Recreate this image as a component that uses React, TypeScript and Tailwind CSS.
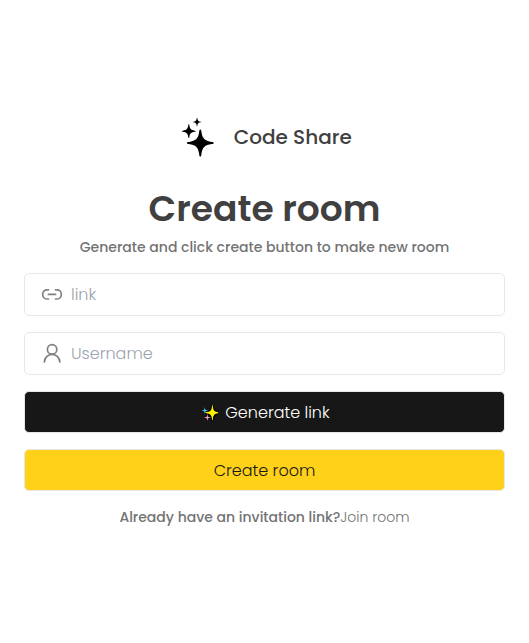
import type { ReactNode } from "react";

function Star({ x, y, r, fill }: { x: number; y: number; r: number; fill: string }) {
  return (
    <path
      transform={`translate(${x} ${y}) scale(${r / 10})`}
      d="M0-10C.6-10 .7-9.5.8-8.5 1.4-3.4 3.4-1.4 8.5-.8 9.5-.7 10-.6 10 0S9.5.7 8.5.8C3.4 1.4 1.4 3.4.8 8.5.7 9.5.6 10 0 10S-.7 9.5-.8 8.5C-1.4 3.4-3.4 1.4-8.5.8-9.5.7-10 .6-10 0S-9.5-.7-8.5-.8C-3.4-1.4-1.4-3.4-.8-8.5-.7-9.5-.6-10 0-10Z"
      fill={fill}
    />
  );
}

function Spark({ x, y, r, fill }: { x: number; y: number; r: number; fill: string }) {
  return (
    <path
      transform={`translate(${x} ${y}) scale(${r / 10})`}
      d="M0-10C.5-10 .6-9 .7-7.5 1-3 3-1 7.5-.7 9-.6 10-.5 10 0S9 .6 7.5.7C3 1 1 3 .7 7.5.6 9 .5 10 0 10S-.6 9-.7 7.5C-1 3-3 1-7.5.7-9 .6-10 .5-10 0S-9-.6-7.5-.7C-3-1-1-3-.7-7.5-.6-9-.5-10 0-10Z"
      fill={fill}
    />
  );
}

function LogoIcon() {
  return (
    <svg width="40" height="40" viewBox="0 0 40 40">
      <Star x={23.3} y={26} r={13.4} fill="#000" />
      <Star x={11.8} y={14.2} r={6.9} fill="#000" />
      <Star x={20} y={5} r={4.2} fill="#000" />
    </svg>
  );
}

function SparklesIcon() {
  return (
    <svg width="16" height="16" viewBox="0 0 16 16">
      <g stroke="#000" strokeWidth="2">
        <Star x={10.4} y={7.6} r={7.6} fill="#000" />
        <Star x={2.8} y={5.4} r={3.1} fill="#000" />
        <Star x={5.4} y={12.4} r={3.1} fill="#000" />
      </g>
      <Spark x={10.4} y={7.6} r={7.6} fill="#fff200" />
      <Spark x={2.8} y={5.4} r={3.3} fill="#45c0eb" />
      <Spark x={5.4} y={12.4} r={3.3} fill="#f09cc8" />
    </svg>
  );
}

function Field({ placeholder, children }: { placeholder: string; children: ReactNode }) {
  return (
    <label className="flex h-[43px] w-full items-center rounded-[5px] border border-gray-200 pl-[15px]">
      <svg width="24" height="24" viewBox="0 0 24 24" fill="none" stroke="#808080" strokeWidth="1.7" strokeLinecap="round" strokeLinejoin="round">
        {children}
      </svg>
      <input
        placeholder={placeholder}
        className="ml-[7px] min-w-0 flex-1 bg-transparent text-base font-light outline-none placeholder:text-[#9ca3af]"
      />
    </label>
  );
}

export default function App() {
  return (
    <main className="flex h-[643px] w-full flex-col items-center bg-white px-6 pt-[117px] font-[Poppins,Inter,sans-serif] text-[#404040]">
      <header className="flex h-10 items-center gap-[16.5px]">
        <LogoIcon />
        <span className="whitespace-nowrap text-xl font-medium">Code Share</span>
      </header>
      <h1 className="mt-[29px] whitespace-nowrap text-4xl leading-[45px] font-semibold">Create room</h1>
      <p className="mt-[6px] whitespace-nowrap text-sm font-medium text-[#737373]">
        Generate and click create button to make new room
      </p>
      <form className="mt-4 flex w-full flex-col gap-4" onSubmit={(e) => e.preventDefault()}>
        <Field placeholder="link">
          <path d="M8.5 6.8H6.9A4.2 4.2 0 0 0 2.7 11v.8A4.2 4.2 0 0 0 6.9 16h1.6M15.5 6.8h1.6a4.2 4.2 0 0 1 4.2 4.2v.8a4.2 4.2 0 0 1-4.2 4.2h-1.6M8.4 11.4h7.2" />
        </Field>
        <Field placeholder="Username">
          <circle cx="12.1" cy="7.4" r="4.7" />
          <path d="M19.8 20a7.7 7.7 0 0 0-15.4 0" />
        </Field>
        <button className="flex h-[42px] items-center justify-center gap-[7px] rounded-[5px] border border-gray-200 bg-[#171717] pt-px pl-[3px] text-base font-light text-white">
          <SparklesIcon />
          <span>Generate link</span>
        </button>
        <button className="flex h-[42px] items-center justify-center rounded-[5px] border border-gray-200 bg-[#ffd118] pt-px text-base font-light text-[#171717]">
          Create room
        </button>
      </form>
      <p className="mt-4 whitespace-nowrap text-sm text-[#737373]">
        <span className="font-medium">Already have an invitation link?</span>
        <a className="font-light">Join room</a>
      </p>
    </main>
  );
}
